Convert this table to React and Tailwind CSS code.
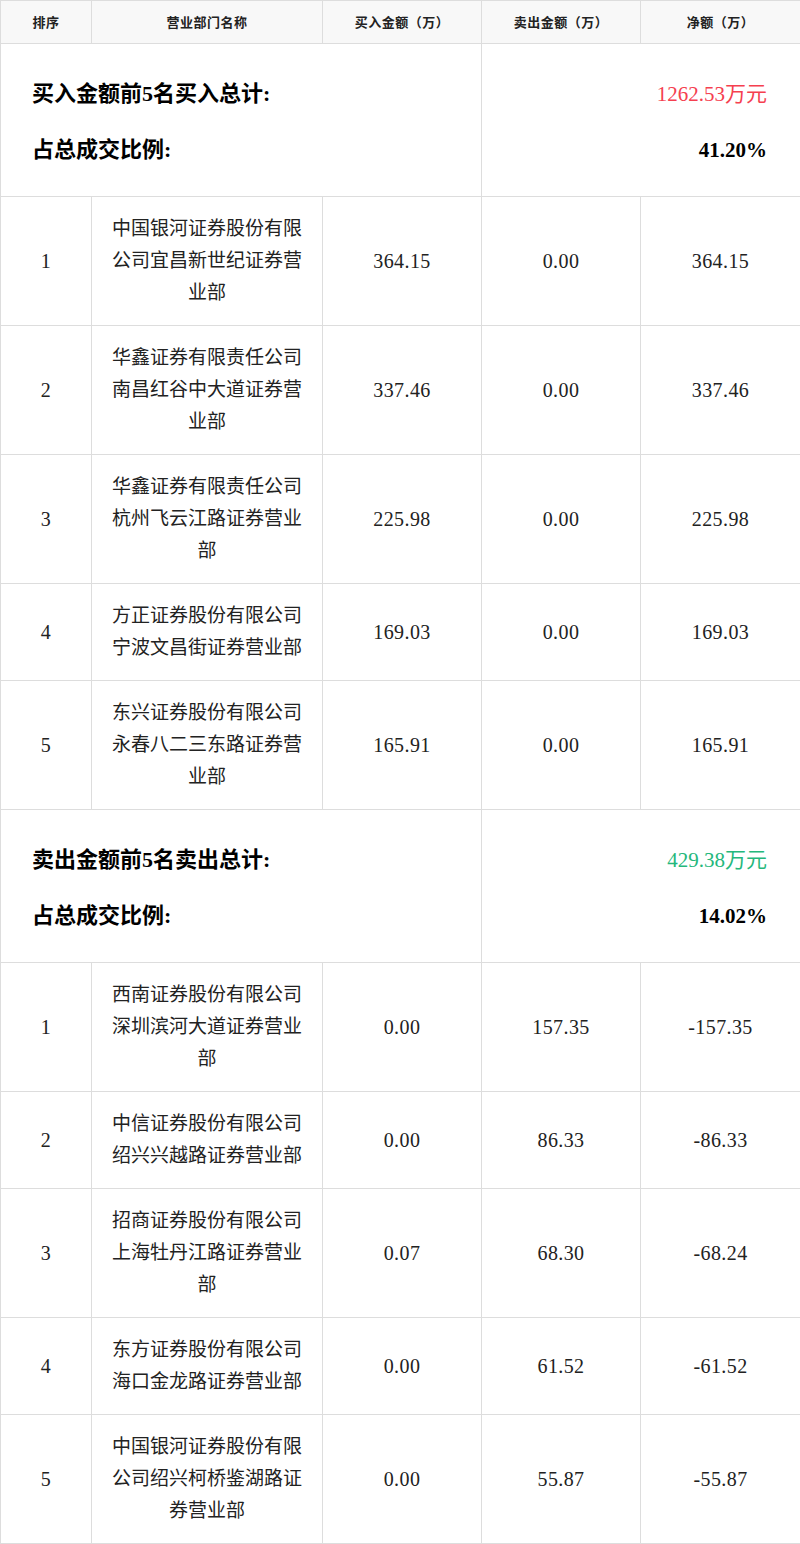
import React from "react";

const buy = [
  ["1", "中国银河证券股份有限公司宜昌新世纪证券营业部", "364.15", "0.00", "364.15"],
  ["2", "华鑫证券有限责任公司南昌红谷中大道证券营业部", "337.46", "0.00", "337.46"],
  ["3", "华鑫证券有限责任公司杭州飞云江路证券营业部", "225.98", "0.00", "225.98"],
  ["4", "方正证券股份有限公司宁波文昌街证券营业部", "169.03", "0.00", "169.03"],
  ["5", "东兴证券股份有限公司永春八二三东路证券营业部", "165.91", "0.00", "165.91"],
];
const sell = [
  ["1", "西南证券股份有限公司深圳滨河大道证券营业部", "0.00", "157.35", "-157.35"],
  ["2", "中信证券股份有限公司绍兴兴越路证券营业部", "0.00", "86.33", "-86.33"],
  ["3", "招商证券股份有限公司上海牡丹江路证券营业部", "0.07", "68.30", "-68.24"],
  ["4", "东方证券股份有限公司海口金龙路证券营业部", "0.00", "61.52", "-61.52"],
  ["5", "中国银河证券股份有限公司绍兴柯桥鉴湖路证券营业部", "0.00", "55.87", "-55.87"],
];

const SERIF = "font-['Liberation_Serif','Noto_Sans_CJK_SC',serif]";
const cell = "border border-[#dddddd] text-center align-middle text-[#222] " + SERIF;
const num = cell + " text-[20px] tracking-[0.4px]";

function Row({ r }) {
  return (
    <tr>
      <td className={num}>{r[0]}</td>
      <td className={cell + " text-[19px] px-[16px] py-[16px] leading-[32px]"}>{r[1]}</td>
      <td className={num}>{r[2]}</td>
      <td className={num}>{r[3]}</td>
      <td className={num}>{r[4]}</td>
    </tr>
  );
}

function Summary({ label, value, color, pct }) {
  return (
    <tr>
      <td colSpan={3} className={"border border-[#dddddd] pl-[31px] pt-[34px] pb-[30px] align-top " + SERIF}>
        <div className="flex flex-col gap-[24px] text-[22px] font-bold leading-[32px] text-black">
          <div>{label}</div>
          <div>占总成交比例:</div>
        </div>
      </td>
      <td colSpan={2} className={"border border-[#dddddd] pr-[33px] pt-[34px] pb-[30px] align-top " + SERIF}>
        <div className="flex flex-col items-end gap-[24px] leading-[32px]">
          <div className={"text-[21px] " + color}>{value}</div>
          <div className="text-[21px] font-bold text-black">{pct}</div>
        </div>
      </td>
    </tr>
  );
}

const th =
  "border border-[#dddddd] bg-[#f8f8f8] h-[43px] text-[13px] font-bold text-[#222] text-center align-middle tracking-[0.5px] font-['Noto_Sans_CJK_SC','Noto_Sans',sans-serif]";

export default function App() {
  return (
    <div className="w-[800px] bg-white">
      <table className={"w-[800px] border-collapse table-fixed " + SERIF}>
        <colgroup>
          <col className="w-[91px]" />
          <col className="w-[231px]" />
          <col className="w-[159px]" />
          <col className="w-[159px]" />
          <col className="w-[160px]" />
        </colgroup>
        <thead>
          <tr>
            <th className={th}>排序</th>
            <th className={th}>营业部门名称</th>
            <th className={th}>买入金额（万）</th>
            <th className={th}>卖出金额（万）</th>
            <th className={th}>净额（万）</th>
          </tr>
        </thead>
        <tbody>
          <Summary label="买入金额前5名买入总计:" value="1262.53万元" color="text-[#f5404f]" pct="41.20%" />
          {buy.map((r) => (
            <Row key={"b" + r[0]} r={r} />
          ))}
          <Summary label="卖出金额前5名卖出总计:" value="429.38万元" color="text-[#25b77c]" pct="14.02%" />
          {sell.map((r) => (
            <Row key={"s" + r[0]} r={r} />
          ))}
        </tbody>
      </table>
    </div>
  );
}
